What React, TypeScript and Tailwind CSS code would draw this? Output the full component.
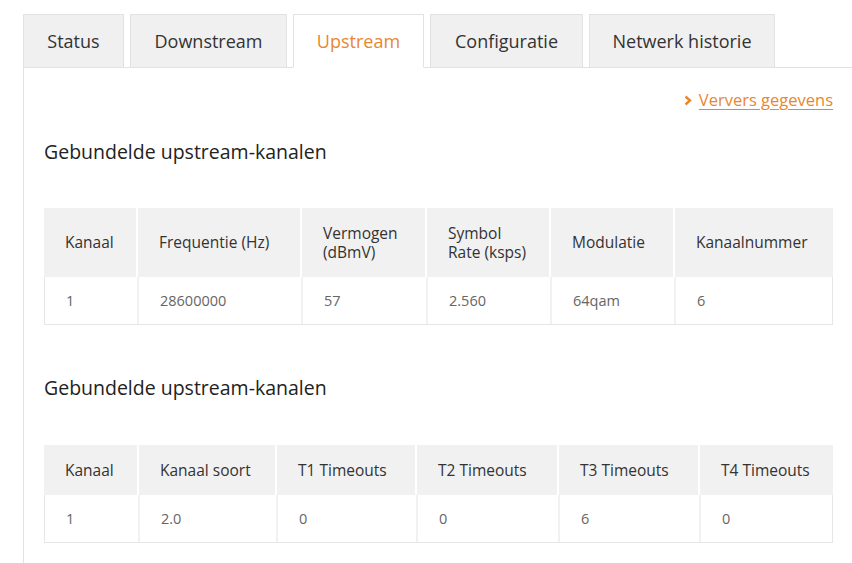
const tabs = [
  { label: "Status", w: "w-[101px]" },
  { label: "Downstream", w: "w-[157px]" },
  { label: "Upstream", w: "w-[131px]", active: true },
  { label: "Configuratie", w: "w-[153px]" },
  { label: "Netwerk historie", w: "w-[186px]" },
];

type Table = {
  cols: string;
  headH: string;
  head: string[][];
  row: string[];
};

const tables: Table[] = [
  {
    cols: "grid-cols-[94px_164px_125px_124px_124px_158px]",
    headH: "h-[69px]",
    head: [["Kanaal"], ["Frequentie (Hz)"], ["Vermogen", "(dBmV)"], ["Symbol", "Rate (ksps)"], ["Modulatie"], ["Kanaalnummer"]],
    row: ["1", "28600000", "57", "2.560", "64qam", "6"],
  },
  {
    cols: "grid-cols-[95px_138px_140px_142px_141px_133px]",
    headH: "h-[50px]",
    head: [["Kanaal"], ["Kanaal soort"], ["T1 Timeouts"], ["T2 Timeouts"], ["T3 Timeouts"], ["T4 Timeouts"]],
    row: ["1", "2.0", "0", "0", "6", "0"],
  },
];

function DataTable({ t }: { t: Table }) {
  return (
    <div className="w-[789px]">
      <div className={`grid ${t.cols} ${t.headH}`}>
        {t.head.map((lines, i) => (
          <div
            key={i}
            className={`flex flex-col justify-center bg-[#f1f1f1] pl-[21px] text-[15.5px] leading-[19px] text-[#333] ${
              i < t.head.length - 1 ? "border-r-2 border-white" : ""
            }`}
          >
            {lines.map((l) => (
              <span key={l} className="block h-[19px]">{l}</span>
            ))}
          </div>
        ))}
      </div>
      <div className={`grid ${t.cols} h-[48px] border-x border-b border-[#e6e6e6]`}>
        {t.row.map((v, i) => (
          <div
            key={i}
            className={`flex items-center pl-[21px] text-[14.5px] text-[#666] ${
              i < t.row.length - 1 ? "border-r-2 border-[#f1f1f1]" : ""
            }`}
          >
            {v}
          </div>
        ))}
      </div>
    </div>
  );
}

export default function App() {
  return (
    <div
      className="w-[852px] h-[563px] overflow-hidden bg-white pt-[14px] pl-[23px]"
      style={{ fontFamily: '"Open Sans", "Liberation Sans", sans-serif' }}
    >
      {/* tabs */}
      <div className="flex gap-[6px] relative z-10">
        {tabs.map((t) => (
          <div
            key={t.label}
            className={`${t.w} h-[54px] -mb-px flex items-center justify-center border border-[#e2e2e2] text-[18px] ${
              t.active ? "bg-white border-b-white text-[#e8872f]" : "bg-[#f0f0f0] text-[#333]"
            }`}
          >
            {t.label}
          </div>
        ))}
      </div>

      {/* panel */}
      <div className="border-l border-t border-[#e2e2e2] pl-[20px] pr-[19px] h-[600px]">
        <div className="flex justify-end items-center pt-[20px] h-[44px]">
          <svg width="8" height="11" viewBox="0 0 8 11" className="mr-[7px]">
            <polyline points="1.5,1.5 6,5.5 1.5,9.5" fill="none" stroke="#e8872f" strokeWidth="2.4" />
          </svg>
          <a className="text-[16.5px] text-[#e8872f] underline underline-offset-[3px]">Ververs gegevens</a>
        </div>

        <h2 className="mt-[28px] text-[19.5px] leading-[24px] text-[#222]">Gebundelde upstream-kanalen</h2>
        <div className="mt-[44px]">
          <DataTable t={tables[0]} />
        </div>

        <h2 className="mt-[51px] text-[19.5px] leading-[24px] text-[#222]">Gebundelde upstream-kanalen</h2>
        <div className="mt-[45px]">
          <DataTable t={tables[1]} />
        </div>
      </div>
    </div>
  );
}
